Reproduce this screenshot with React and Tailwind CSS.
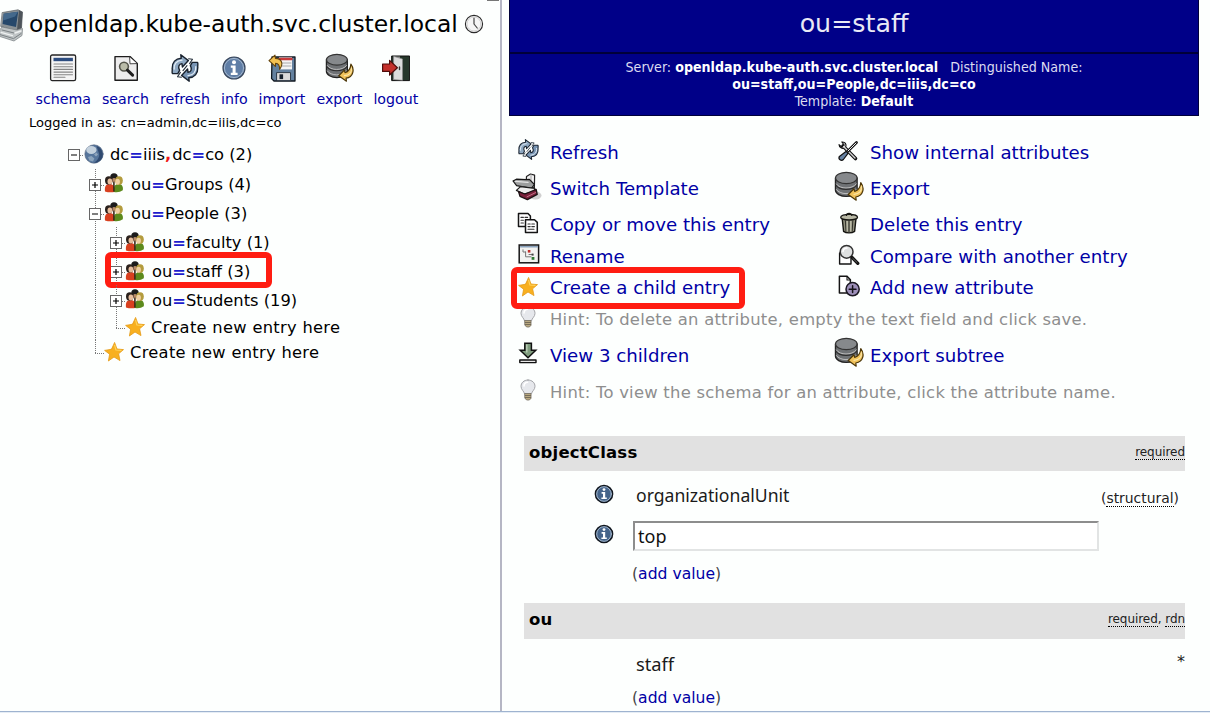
import React from 'react';

const Svg = ({ box = '0 0 24 24', className, children }) => (
  <svg viewBox={box} className={`block shrink-0 ${className}`} fill="none" strokeLinecap="round" strokeLinejoin="round">
    {children}
  </svg>
);

const Computer = () => (
  <Svg box="0 0 24 34" className="h-[34px] w-[24px]">
    <path d="M2.5 3.5 18 0.8 22.5 3 21.5 19 15 21.5 1 17.5Z" fill="#8b9296" stroke="#5b6165" strokeWidth="0.7" />
    <path d="M19 1.2 22.5 3 21.5 19 17 21Z" fill="#4e555b" />
    <path d="M3.8 4.8 18.2 2.8 16 18 2.6 15Z" fill="#26486b" />
    <path d="M3.8 4.8 18 2.8 15 7.5 3.2 11.5Z" fill="#44698c" />
    <path d="M0 20.5 2 18 17 21 22.5 19.5 22 26.5 14 32 0 27.5Z" fill="#bfc4c5" stroke="#767c80" strokeWidth="0.7" />
    <path d="M0 25.6 13.5 29.6 21 24.6M2 21 14 24" stroke="#7a8184" strokeWidth="1" />
    <path d="M1 23.4 12.5 26.6" stroke="#eef1f1" strokeWidth="1.2" />
    <path d="M15 24 21 22" stroke="#eef1f1" strokeWidth="1.4" />
  </Svg>
);

const Clock = () => (
  <Svg box="0 0 20 20" className="h-[20px] w-[20px]">
    <circle cx="10" cy="10" r="8.6" fill="#f6f6f6" stroke="#2a2a2a" strokeWidth="1.1" />
    <circle cx="10" cy="10" r="7" stroke="#c9c9c9" strokeWidth="0.8" />
    <path d="M10 4.2V10L13.2 14" stroke="#444" strokeWidth="1.2" />
  </Svg>
);

const Schema = () => (
  <Svg box="0 0 28 28" className="h-[28px] w-[28px]">
    <rect x="1.6" y="1" width="25" height="25.6" rx="1.6" fill="#f4f4f4" stroke="#252525" strokeWidth="1.3" />
    <rect x="4.5" y="3.8" width="19.4" height="3.4" fill="#2d4d80" />
    <path d="M5 10H23.5M5 12.7H23.5M5 15.4H23.5M5 18.1H23.5M5 20.8H23.5M5 23.3H16" stroke="#858585" strokeWidth="1.1" />
  </Svg>
);

const Search = () => (
  <Svg box="0 0 28 28" className="h-[28px] w-[28px]">
    <path d="M3 2.6H18L25.3 9.5V26.3H3Z" fill="#ededed" stroke="#1d1d1d" strokeWidth="1.4" />
    <path d="M17.6 2.8 18 9.8 25.2 9.6Z" fill="#fff" stroke="#333" strokeWidth="0.9" />
    <circle cx="12" cy="12.6" r="4.4" fill="#b9bba8" stroke="#55564c" strokeWidth="1.6" />
    <path d="M15.4 16.2 20.6 21.2" stroke="#1f1f1f" strokeWidth="3" />
  </Svg>
);

const Refresh = ({ className }) => (
  <Svg box="0 0 28 28" className={className}>
    <path d="M6.8 19.6H1.4C0.6 17.6 1.6 16.4 1.2 14.5 1 8.5 4.5 4.6 10.2 4.2L9.8 0.8 17.4 6.6 11.4 13 11 9.6C8 10 6.6 12.6 8.6 16.4Z" fill="#8fa9c2" stroke="#18222e" strokeWidth="1.4" />
    <path d="M21.2 8.4H26.6C27.4 10.4 26.4 11.6 26.8 13.5 27 19.5 23.5 23.4 17.8 23.8L18.2 27.2 10.6 21.4 16.6 15 17 18.4C20 18 21.4 15.4 19.4 11.6Z" fill="#7895b4" stroke="#18222e" strokeWidth="1.4" />
    <path d="M3.2 15C2.8 10 5.4 6.6 11 6.2M24.8 12.6C25.2 18 22.6 21 17 21.6" stroke="#e3edf5" strokeWidth="1.3" />
    <path d="M17.6 4.8 21.5 5.2 18.6 9.6M10.4 23.2 6.5 22.8 9.4 18.4M12 16.6 16 11.6" stroke="#26313d" strokeWidth="1.1" />
  </Svg>
);

const InfoBig = () => (
  <Svg box="0 0 24 24" className="h-[24px] w-[24px]">
    <circle cx="12" cy="12" r="11" fill="#5f7ea6" stroke="#39475c" strokeWidth="1.2" />
    <circle cx="12" cy="12" r="9.6" stroke="#a3b7cd" strokeWidth="1" />
    <circle cx="12" cy="6.2" r="2" fill="#fff" />
    <path d="M8.8 9.6H13.6V16.8H15.6V19H8.8V16.8H10.6V11.8H8.8Z" fill="#fff" />
  </Svg>
);

const InfoSmall = () => (
  <Svg box="0 0 20 20" className="h-[20px] w-[20px]">
    <circle cx="10" cy="10" r="8.6" fill="#45648a" stroke="#11161d" strokeWidth="1.5" />
    <circle cx="10" cy="10" r="7.3" stroke="#adc0d3" strokeWidth="0.9" />
    <circle cx="10" cy="5.6" r="1.4" fill="#fff" />
    <path d="M7.6 8.1H11.2V13.4H12.8V15H7.4V13.4H9V9.7H7.6Z" fill="#fff" />
  </Svg>
);

const Import = () => (
  <Svg box="0 0 28 28" className="h-[28px] w-[28px]">
    <path d="M4 3H27V27H6L3.6 24.6Z" fill="#63819f" stroke="#101820" strokeWidth="1.3" />
    <rect x="11" y="3.4" width="13" height="12" fill="#f5f5f5" />
    <path d="M11.5 5H23.5" stroke="#c83a3a" strokeWidth="2.4" />
    <path d="M14 9H23M14 12H23" stroke="#aaa" strokeWidth="1" />
    <rect x="9" y="18.6" width="13.5" height="8" fill="#dadada" stroke="#27323e" strokeWidth="0.9" />
    <rect x="11.5" y="20.3" width="3.6" height="4.8" fill="#16202c" />
    <path d="M1 6.6 7 1.2 7.4 4.4C13.5 4.5 16 9.5 11.6 15.4 11.8 11.5 10.8 9.5 7.6 9.2L7.4 12.4Z" fill="#f3c252" stroke="#63430b" strokeWidth="1.1" />
  </Svg>
);

const Database = ({ className }) => (
  <Svg box="0 0 30 30" className={className}>
    <path d="M1.5 7V19C1.5 22.6 6.5 25.4 12.3 25.4S23.1 22.6 23.1 19V7Z" fill="#6f7275" stroke="#232323" strokeWidth="1.4" />
    <path d="M2.4 18.6C4 21 8 22.6 12 22.6S20.5 21 22.3 18.6M2.4 13C4 15.6 8 17 12 17S20.5 15.6 22.3 13" stroke="#c6c6c6" strokeWidth="0.9" />
    <path d="M2 14.4C4 17.2 8 18.4 12 18.4S20.5 17.2 22.6 14.4" stroke="#2e2e2e" strokeWidth="1.1" />
    <ellipse cx="12.3" cy="7" rx="10.8" ry="5.6" fill="#86898c" stroke="#343434" strokeWidth="1.2" />
    <path d="M26.8 11.5C31 17 29.3 25 21.8 26L22.2 29.2 14.2 23.5 20 17.8 20.7 20.4C23.8 19.5 26.4 16 26.8 11.5Z" fill="#f0c25a" stroke="#4b3609" strokeWidth="1.2" />
    <path d="M27.4 15.5C28 20 25.5 23 20 23.4" stroke="#fbe6a8" strokeWidth="1.1" />
  </Svg>
);

const Logout = () => (
  <Svg box="0 0 28 28" className="h-[28px] w-[28px]">
    <rect x="10" y="2" width="17.6" height="24.6" fill="#26372b" stroke="#111" strokeWidth="1" />
    <path d="M11 2.5H18V26H11Z" fill="#878787" />
    <path d="M12 2.5 20.5 5V26.3L12 25.5Z" fill="#dcdcdc" stroke="#8a8a8a" strokeWidth="0.6" />
    <path d="M0.6 10H7.6V6.4L15.4 13.7 7.6 21V17.4H0.6Z" fill="#c3302b" stroke="#4f0d0b" strokeWidth="1.2" />
    <path d="M17.5 13V15.5" stroke="#333" strokeWidth="1.4" />
  </Svg>
);

const Globe = () => (
  <Svg box="0 0 20 20" className="h-[20px] w-[20px]">
    <circle cx="10" cy="10" r="9.2" fill="#56769c" stroke="#55657c" strokeWidth="0.6" />
    <ellipse cx="7.4" cy="6" rx="5.2" ry="4" fill="#c3d1dd" />
    <path d="M12.5 2C17 3.4 19.4 8 18.6 12.5 17.6 16.5 14 18.8 10 18.8 14 16 15.8 12.5 15 9.4Z" fill="#2f4a70" />
    <path d="M4 13 7.4 12 10.4 14.4 9 17.4 5.4 16.5Z" fill="#8ba4bc" />
    <path d="M10 10.4 12.4 8.5 14 10.6 12 12.6Z" fill="#8fa6bd" />
  </Svg>
);

const People = () => (
  <Svg box="0 0 20 20" className="h-[20px] w-[20px]">
    <circle cx="10" cy="4" r="3.7" fill="#1c1c1c" />
    <path d="M8 9V6C9 4.8 11 4.8 12 6V9Z" fill="#b98a68" />
    <path d="M1 18.4C0.4 13 2 11 5.6 11S10.6 13 10.4 19Q5 19.8 1 18.4Z" fill="#d8401f" />
    <path d="M10 19C9.4 13 11.2 11 14.4 11S19.4 13 18.8 17.2Q15.5 19.8 10 19Z" fill="#5c8a1c" />
    <ellipse cx="4.8" cy="7.4" rx="3.8" ry="4.2" fill="#2a211c" />
    <ellipse cx="5.9" cy="8.6" rx="2.4" ry="3" fill="#e6bd9d" />
    <ellipse cx="15" cy="7.6" rx="3.8" ry="4.4" fill="#b39c3d" />
    <ellipse cx="13.6" cy="8.8" rx="2.3" ry="3" fill="#efcfa2" />
    <path d="M9.9 9.4V18" stroke="#3c2a18" strokeWidth="1.6" />
  </Svg>
);

const Star = () => (
  <Svg box="0 0 20 20" className="h-[20px] w-[20px]">
    <path d="M10.7 0.8 13 7 19.5 7.6 14.6 11.8 16 18.6 10 15 4.4 19 5.6 12.2 0.6 8.4 7.2 7.3Z" fill="#f8b01f" stroke="#e49a16" strokeWidth="0.8" />
    <path d="M10.6 3.2 11.9 8 17 8.4" stroke="#ffd45c" strokeWidth="1.1" />
  </Svg>
);

const Scanner = () => (
  <Svg box="0 0 30 28" className="h-[28px] w-[30px]">
    <ellipse cx="23.5" cy="22.5" rx="6" ry="4" fill="#d0d0d0" />
    <path d="M14.5 3.4 18.5 1 22.6 2.2 22.4 14.5 14 13Z" fill="#f2f2f2" stroke="#222" strokeWidth="1.2" />
    <path d="M19 1.6V11" stroke="#999" strokeWidth="0.9" />
    <path d="M1 8 4.4 6.2 14 6.6 17.4 6.4 22.4 11.5 19.4 15.4 4.6 12.6Z" fill="#9c9e9e" stroke="#161616" strokeWidth="1.2" />
    <path d="M3.4 8.4 16 9.4" stroke="#e4e4e4" strokeWidth="1.3" />
    <path d="M4.4 17.4 8.5 13.6 22.8 15.4 22.4 18.4 12 21Z" fill="#ededed" stroke="#1c1c1c" strokeWidth="1.2" />
    <path d="M6.5 18.6 13 21 24.2 16.4 25.2 21.4 15.4 26.6 8 23.4Z" fill="#79203a" stroke="#1b1013" strokeWidth="1.3" />
    <path d="M15 23.8 23.6 19.6" stroke="#c07386" strokeWidth="1" />
  </Svg>
);

const Copy = () => (
  <Svg box="0 0 22 22" className="h-[22px] w-[22px]">
    <path d="M1.5 1.5H11L13.4 4V14.4H1.5Z" fill="#fff" stroke="#151515" strokeWidth="1.5" />
    <path d="M4 5.4H6.4M8 5.4H10.6M4 8.2H6.4M4 11H6.4" stroke="#333" strokeWidth="1.1" />
    <path d="M8.5 7.7H17.5L20.3 10.4V20.6H8.5Z" fill="#fff" stroke="#151515" strokeWidth="1.5" />
    <path d="M11 12H13.2M14.8 12H17.4M11 14.6H13.2M14.8 14.6H17.4M11 17.2H17" stroke="#333" strokeWidth="1.1" />
  </Svg>
);

const Rename = () => (
  <Svg box="0 0 22 20" className="h-[20px] w-[22px]">
    <rect x="1.2" y="1" width="19.4" height="17.8" fill="#f2f3f1" stroke="#151515" strokeWidth="1.5" strokeLinejoin="miter" />
    <path d="M2.5 2.8H19.4" stroke="#8aa3bd" strokeWidth="1.4" />
    <path d="M5 5.8V8H7.6M7.6 8V12.8H13" stroke="#777" strokeWidth="1" />
    <rect x="9.8" y="6" width="2.6" height="2.6" fill="#c1302b" />
    <path d="M11 10.5H14" stroke="#777" />
    <rect x="13.6" y="9.6" width="2" height="2" fill="#444" />
    <rect x="13.6" y="13" width="2.8" height="2.8" fill="#2b7a32" />
  </Svg>
);

const Bulb = () => (
  <Svg box="0 0 18 22" className="h-[22px] w-[18px]">
    <path d="M9 1C4.7 1 2 4 2 7.3 2 10.8 5 12 5.6 15H12.4C13 12 16 10.8 16 7.3 16 4 13.3 1 9 1Z" fill="#e6e8ec" stroke="#a4a5a9" strokeWidth="1" />
    <path d="M5 7C5 4.8 6.5 3.4 8.6 3.2" stroke="#fff" strokeWidth="1.6" />
    <path d="M6 14.5H12V19.3L10.4 21H7.6L6 19.3Z" fill="#b9a980" stroke="#736d62" strokeWidth="0.8" />
    <path d="M6.3 16.5H11.7M6.3 18.5H11.7" stroke="#6e6655" strokeWidth="0.9" />
  </Svg>
);

const Down = () => (
  <Svg box="0 0 20 22" className="h-[22px] w-[20px]">
    <path d="M6.8 1.2H13.4V8.2H17.8L10 15.8 2.2 8.2H6.8Z" fill="#7f9c7d" stroke="#111" strokeWidth="1.5" strokeLinejoin="miter" />
    <path d="M8.8 3V10" stroke="#bdd0ba" strokeWidth="1.4" />
    <rect x="1.8" y="18" width="16.2" height="2.6" fill="#e8e8e8" stroke="#111" strokeWidth="1.4" />
  </Svg>
);

const Tools = () => (
  <Svg box="0 0 22 22" className="h-[22px] w-[22px]">
    <path d="M6 6 18.5 18.5" stroke="#111" strokeWidth="3.6" />
    <path d="M2 4.6 5 7.2 7.2 5 4.8 2C8 1.5 10 4.5 8.6 7.2 6 9.6 2 8 2 4.6Z" fill="#ddd" stroke="#111" strokeWidth="1.1" />
    <path d="M6.6 6.6 18 18" stroke="#d5d5d5" strokeWidth="1.4" />
    <path d="M19.5 2.5 11 11" stroke="#111" strokeWidth="2.8" />
    <path d="M19 3 11 11" stroke="#ededed" strokeWidth="1" />
    <path d="M9 11.4 11 13.4 6.4 19.5C4.4 21.6 0.8 19.4 2.4 16.4Z" fill="#6682a3" stroke="#111" strokeWidth="1.2" />
  </Svg>
);

const Trash = () => (
  <Svg box="0 0 20 22" className="h-[22px] w-[20px]">
    <path d="M3.2 6.5H17L15.6 19.4C13 21.3 7 21.3 4.6 19.4Z" fill="#92927f" stroke="#151511" strokeWidth="1.4" />
    <path d="M6.4 9 7 19M10 9.4V19.8M13.8 9 13.2 19" stroke="#34342d" strokeWidth="1.1" />
    <path d="M8.2 9V19M11.8 9V19" stroke="#d0d0bd" strokeWidth="0.9" />
    <ellipse cx="10.1" cy="5.2" rx="8.4" ry="2.8" fill="#b8b8a5" stroke="#151511" strokeWidth="1.3" />
    <path d="M7.4 3.4C7.4 0.8 12.8 0.8 12.8 3.4" stroke="#151511" strokeWidth="1.3" />
  </Svg>
);

const Compare = () => (
  <Svg box="0 0 22 22" className="h-[22px] w-[22px]">
    <path d="M1.6 9V20H13V14" fill="#fff" stroke="#151515" strokeWidth="1.4" />
    <circle cx="8.6" cy="7.8" r="6.4" fill="#dfe1e1" stroke="#333" strokeWidth="1.5" />
    <path d="M5 7.4C5.2 5.2 7 4 9 4" stroke="#fff" strokeWidth="1.6" />
    <path d="M14 13.4 19.8 19.4" stroke="#111" strokeWidth="3.2" />
    <path d="M14.8 14.4 19 18.4" stroke="#777" strokeWidth="0.8" />
  </Svg>
);

const AddAttr = () => (
  <Svg box="0 0 22 22" className="h-[22px] w-[22px]">
    <path d="M1.4 1.2H9L12.4 4.8V18H1.4Z" fill="#fff" stroke="#151515" strokeWidth="1.5" />
    <path d="M9 1.4V5H12.4" stroke="#151515" strokeWidth="1.1" />
    <circle cx="14.6" cy="14.2" r="6.6" fill="#9d8fb9" stroke="#1b1822" strokeWidth="1.5" />
    <path d="M14.6 10.8V17.6M11.2 14.2H18" stroke="#151218" strokeWidth="1.5" />
  </Svg>
);

const tools = [
  { label: 'schema', icon: <Schema /> },
  { label: 'search', icon: <Search /> },
  { label: 'refresh', icon: <Refresh className="h-[28px] w-[28px]" /> },
  { label: 'info', icon: <InfoBig /> },
  { label: 'import', icon: <Import /> },
  { label: 'export', icon: <Database className="h-[29px] w-[29px]" /> },
  { label: 'logout', icon: <Logout /> },
];

const Eq = () => <span className="font-bold text-[#1c1ccd]">=</span>;

const tree = [
  { h: 'h-[30px]', height: 30, depth: 0, sign: '-', root: true, icon: <Globe />, text: <>dc<Eq />iiis<span className="font-bold text-[#f01818]">,</span><span className="ml-px">dc</span><Eq />co (2)</> },
  { h: 'h-[30px]', height: 30, depth: 1, sign: '+', icon: <People />, text: <>ou<Eq />Groups (4)</> },
  { h: 'h-[28px]', height: 28, depth: 1, sign: '-', icon: <People />, text: <>ou<Eq />People (3)</> },
  { h: 'h-[31px]', height: 31, depth: 2, sign: '+', icon: <People />, text: <>ou<Eq />faculty (1)</> },
  { h: 'h-[27px]', height: 27, depth: 2, sign: '+', marked: true, icon: <People />, text: <>ou<Eq />staff (3)</> },
  { h: 'h-[30px]', height: 30, depth: 2, sign: '+', icon: <People />, text: <>ou<Eq />Students (19)</> },
  { h: 'h-[25px]', height: 25, depth: 2, icon: <Star />, text: 'Create new entry here' },
  { h: 'h-[25px]', height: 25, depth: 1, icon: <Star />, text: 'Create new entry here' },
];

function Branch({ height, sign, root }) {
  const m = Math.floor(height / 2) + 1;
  const bottom = root || !sign ? m : height;
  return (
    <svg width="16" height={height} className="block shrink-0" shapeRendering="crispEdges">
      {!root && <path d={`M6.5 0V${bottom}`} stroke="#777" strokeDasharray="1 1" />}
      <path d={`M6 ${m + 0.5}H16`} stroke="#777" strokeDasharray="1 1" />
      {sign && (
        <>
          <rect x="0.5" y={m - 5.5} width="11" height="11" fill="#fff" stroke="#666" />
          <rect x="3" y={m - 0.5} width="6" height="1" fill="#000" shapeRendering="geometricPrecision" />
          {sign === '+' && <rect x="5.4" y={m - 3} width="1.2" height="6" fill="#000" shapeRendering="geometricPrecision" />}
        </>
      )}
    </svg>
  );
}

function TreeRow({ row }) {
  return (
    <div className={`relative flex w-fit items-center pl-[68px] ${row.h}`}>
      {row.depth > 0 && <div className="w-[21px] shrink-0" />}
      {row.depth > 1 && (
        <svg width="21" height={row.height} className="block shrink-0" shapeRendering="crispEdges">
          <path d={`M6.5 0V${row.height}`} stroke="#777" strokeDasharray="1 1" />
        </svg>
      )}
      <Branch height={row.height} sign={row.sign} root={row.root} />
      <div className={row.root ? '' : 'mb-[2px] -ml-px mr-px'}>{row.icon}</div>
      <span className={`pt-[2px] text-[16.3px] leading-none text-black ${row.sign ? 'pl-[6px]' : 'pl-[5px] tracking-[0.3px]'}`}>{row.text}</span>
      {row.marked && <div className="absolute left-[105px] top-[-6px] h-[36px] w-[167px] rounded-[6px] border-[6px] border-[#ff1d12]" />}
    </div>
  );
}

const Link = ({ icon, children, className = '' }) => (
  <div className={`flex items-center ${className}`}>
    <div className="flex w-[38px] shrink-0 justify-center">{icon}</div>
    <a className="pl-[3px] pt-[2px] text-[18.2px] leading-none text-[#0000a5]">{children}</a>
  </div>
);

const Action = ({ h, left, right, marked }) => (
  <div className={`relative grid grid-cols-[320px_1fr] items-center ${h}`}>
    {left}
    {right}
    {marked && <div className="absolute left-[2px] top-[-5px] h-[42px] w-[234px] rounded-[6px] border-[6px] border-[#ff1d12]" />}
  </div>
);

const Hint = ({ h, children }) => (
  <div className={`flex items-center ${h}`}>
    <div className="flex w-[38px] shrink-0 justify-center pb-[5px]"><Bulb /></div>
    <span className="whitespace-nowrap pl-[3px] pt-px text-[16.4px] leading-none tracking-[0.25px] text-[#8e8e8e]">{children}</span>
  </div>
);

const Dotted = ({ children }) => <span className="border-b border-dotted border-black">{children}</span>;

const Bar = ({ title, className, children }) => (
  <div className={`ml-[15px] flex w-[661px] justify-between bg-[#e1e1e1] pl-[5px] ${className}`}>
    <b className="pt-[8px] text-[16.5px] leading-[18px] tracking-[0.2px] text-black">{title}</b>
    <span className="pt-[10px] text-[12px] leading-[12px] tracking-[-0.06px] text-[#222]">{children}</span>
  </div>
);

const AddValue = ({ className }) => (
  <div className={`pl-[123px] text-[15.6px] leading-[20px] text-[#444] ${className}`}>
    (<a className="text-[#0000a5]">add value</a>)
  </div>
);

export default function App() {
  return (
    <div className="flex h-[713px] w-[1210px] flex-col overflow-hidden bg-[#fdfffe] font-['DejaVu_Sans',sans-serif]">
      <div className="flex h-[711px]">
        <aside className="h-full w-[500px] shrink-0 overflow-hidden">
          <div className="flex h-[50px]">
            <div className="w-[29px] shrink-0 pt-[9px]"><Computer /></div>
            <h1 className="w-[435px] whitespace-nowrap pt-[10px] text-[23.45px] leading-[28px] text-black">openldap.kube-auth.svc.cluster.local</h1>
            <div className="pt-[14px]"><Clock /></div>
            <div className="ml-[3px] h-px w-[12px] bg-[#777]" />
          </div>
          <nav className="flex h-[62px] gap-[11px] pl-[35.5px]">
            {tools.map((t) => (
              <div key={t.label} className="flex flex-col items-center">
                <div className="flex h-[35px] items-center justify-center">{t.icon}</div>
                <a className="pt-[5px] text-[14.2px] leading-[18px] text-[#0000a5]">{t.label}</a>
              </div>
            ))}
          </nav>
          <div className="h-[27px] pl-[29px] pt-[3px] text-[13.05px] leading-[16px] text-black">Logged in as: cn=admin,dc=iiis,dc=co</div>
          {tree.map((row, i) => <TreeRow key={i} row={row} />)}
        </aside>
        <div className="w-[2px] shrink-0 bg-[#b5b6c4]" />
        <main className="flex-1 pl-[7px]">
          <header className="h-[116px] w-[690px] border border-t-0 border-[#00003a] bg-[#000088] text-center text-white">
            <h2 className="h-[54px] border-b-2 border-[#00003a] pt-[8px] text-[25.3px] leading-[32px] text-[#e9e9f5]">ou=staff</h2>
            <div className="pt-[5px] font-['DejaVu_Sans_Condensed','DejaVu_Sans',sans-serif] text-[14.1px] leading-[17px] text-[#dcdcf0]">
              <div>Server: <b className="text-white">openldap.kube-auth.svc.cluster.local</b> &nbsp; Distinguished Name:</div>
              <div><b className="text-white">ou=staff,ou=People,dc=iiis,dc=co</b></div>
              <div>Template: <b className="text-white">Default</b></div>
            </div>
          </header>
          <section className="pt-[18px]">
            <Action h="h-[36px]" left={<Link icon={<Refresh className="mb-[6px] h-[21px] w-[21px]" />}>Refresh</Link>} right={<Link icon={<div className="mb-[2px]"><Tools /></div>}>Show internal attributes</Link>} />
            <Action h="h-[37px]" left={<Link icon={<div className="mb-[4px] mr-[2px]"><Scanner /></div>}>Switch Template</Link>} right={<Link icon={<Database className="mb-[5px] ml-[2px] h-[30px] w-[30px]" />}>Export</Link>} />
            <Action h="h-[34px] pt-[1px]" left={<Link icon={<div className="mb-[4px]"><Copy /></div>}>Copy or move this entry</Link>} right={<Link icon={<div className="mb-[4px] ml-[2px]"><Trash /></div>}>Delete this entry</Link>} />
            <Action h="h-[31px]" left={<Link icon={<div className="mb-[5px] ml-px"><Rename /></div>}>Rename</Link>} right={<Link icon={<div className="mb-[4px] ml-px"><Compare /></div>}>Compare with another entry</Link>} />
            <Action h="h-[31px]" marked left={<Link icon={<div className="mb-[2px]"><Star /></div>}>Create a child entry</Link>} right={<Link icon={<div className="mb-[4px] ml-px"><AddAttr /></div>}>Add new attribute</Link>} />
            <Hint h="h-[33px]">Hint: To delete an attribute, empty the text field and click save.</Hint>
            <Action h="h-[38px]" left={<Link icon={<div className="mb-[4px]"><Down /></div>}>View 3 children</Link>} right={<Link icon={<Database className="mb-[6px] ml-[2px] h-[30px] w-[30px]" />}>Export subtree</Link>} />
            <Hint h="h-[37px]">Hint: To view the schema for an attribute, click the attribute name.</Hint>
          </section>
          <Bar title="objectClass" className="mt-[25px] h-[35px]"><Dotted>required</Dotted></Bar>
          <div className="flex h-[50px] w-[670px] pl-[85px] pt-[13px]">
            <InfoSmall />
            <span className="ml-[22px] flex-1 font-['Noto_Sans',sans-serif] text-[17.6px] leading-[23px] text-[#1a1a1a]">organizationalUnit</span>
            <span className="pt-[7px] text-[13.9px] leading-[14px] text-[#222]">(<Dotted>structural</Dotted>)</span>
          </div>
          <div className="flex h-[30px] pl-[85px]">
            <div className="pt-[3px]"><InfoSmall /></div>
            <div className="ml-[19px] h-[30px] w-[466px] border-2 border-[#e2e4e4] border-l-[#8d8d8d] border-t-[#8d8d8d] bg-white pl-[3px] font-['Noto_Sans',sans-serif] text-[18px] leading-[26px] text-[#111]">top</div>
          </div>
          <AddValue className="mt-[13px]" />
          <Bar title="ou" className="mt-[19px] h-[36px]"><Dotted>required</Dotted>, <Dotted>rdn</Dotted></Bar>
          <div className="flex h-[48px] w-[676px] justify-between pl-[127px] pt-[13px]">
            <span className="font-['Noto_Sans',sans-serif] text-[18.3px] leading-[23px] text-[#1a1a1a]">staff</span>
            <span className="text-[16px] leading-[20px] text-[#222]">*</span>
          </div>
          <AddValue className="pt-px" />
        </main>
      </div>
      <div className="h-[2px] border-t border-[#9fb3d0] bg-[#e6edf5]" />
    </div>
  );
}
